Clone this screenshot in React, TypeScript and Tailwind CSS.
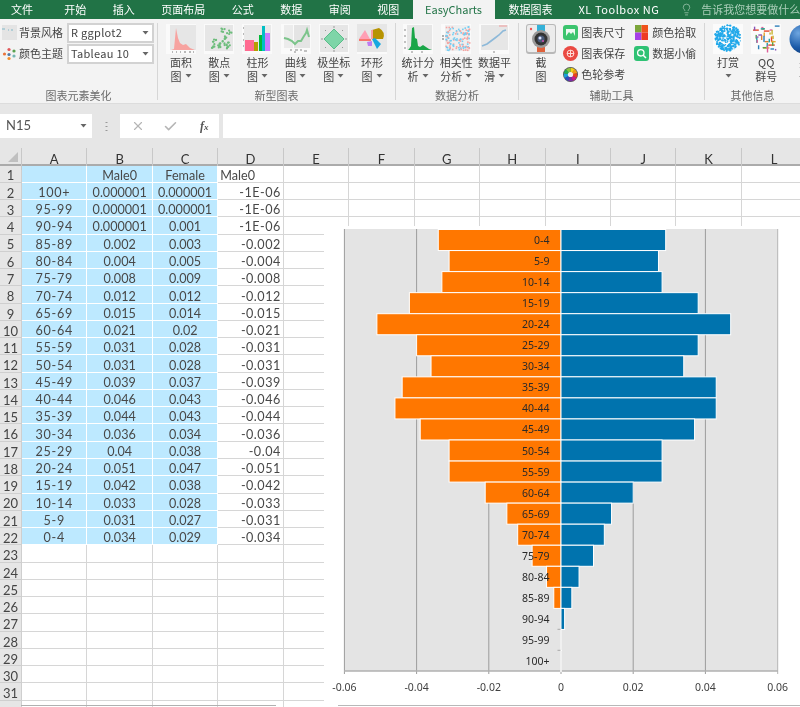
import React from "react";
import { X, Check, Lightbulb } from "lucide-react";

const cjk = "[font-family:'Noto_Sans_CJK_SC','Noto_Sans',sans-serif]";

type Row = [string, string, string, string];
const rows: Row[] = [
  ["", "Male0", "Female", "Male0"],
  ["100+", "0.000001", "0.000001", "-1E-06"],
  ["95-99", "0.000001", "0.000001", "-1E-06"],
  ["90-94", "0.000001", "0.001", "-1E-06"],
  ["85-89", "0.002", "0.003", "-0.002"],
  ["80-84", "0.004", "0.005", "-0.004"],
  ["75-79", "0.008", "0.009", "-0.008"],
  ["70-74", "0.012", "0.012", "-0.012"],
  ["65-69", "0.015", "0.014", "-0.015"],
  ["60-64", "0.021", "0.02", "-0.021"],
  ["55-59", "0.031", "0.028", "-0.031"],
  ["50-54", "0.031", "0.028", "-0.031"],
  ["45-49", "0.039", "0.037", "-0.039"],
  ["40-44", "0.046", "0.043", "-0.046"],
  ["35-39", "0.044", "0.043", "-0.044"],
  ["30-34", "0.036", "0.034", "-0.036"],
  ["25-29", "0.04", "0.038", "-0.04"],
  ["20-24", "0.051", "0.047", "-0.051"],
  ["15-19", "0.042", "0.038", "-0.042"],
  ["10-14", "0.033", "0.028", "-0.033"],
  ["5-9", "0.031", "0.027", "-0.031"],
  ["0-4", "0.034", "0.029", "-0.034"],
];

const pyramid = rows.slice(1).reverse();
const columns = ["A", "B", "C", "D", "E", "F", "G", "H", "I", "J", "K", "L"];

function rand(seed: number) {
  let s = seed;
  return () => {
    s = (s * 16807) % 2147483647;
    return s / 2147483647;
  };
}

function Caret({ className = "" }: { className?: string }) {
  return (
    <svg width="7" height="4" viewBox="0 0 7 4" className={className}>
      <polygon points="0.5,0 6.5,0 3.5,3.5" fill="#666" />
    </svg>
  );
}

function Panel({ x = 4, w = 26, y = 1, h = 26 }: { x?: number; w?: number; y?: number; h?: number }) {
  return (
    <>
      <rect x="0" y="0" width="30" height="30" fill="#fafafa" />
      <rect x={x} y={y} width={w} height={h} fill="#e6e6e6" />
    </>
  );
}

const Mini = ({ children }: { children: React.ReactNode }) => (
  <svg width="30" height="30" viewBox="0 0 30 30">
    {children}
  </svg>
);

const AreaIcon = () => (
  <Mini>
    <Panel x={4} w={26} y={1} h={25} />
    <path d="M5 26 L8 25 L10 4 L12 14 L14 19 L17 21 L20 20 L24 24 L29 26 Z" fill="#f7a3a0" />
    <path d="M6 28h1M10 28h1M14 28h1M18 28h2M23 28h2M27 28h1" stroke="#777" />
  </Mini>
);

const scatter = (() => {
  const r = rand(77);
  const c: [number, number][] = [[20, 6], [25, 8], [23, 13], [11, 17], [18, 19], [25, 20], [8, 22], [15, 22], [22, 23]];
  return c.flatMap(([x, y]) => Array.from({ length: 5 }, () => [x + (r() - 0.5) * 5, y + (r() - 0.5) * 4]));
})();
const ScatterIcon = () => (
  <Mini>
    <Panel x={1} w={28} y={1} h={26} />
    {scatter.map(([x, y], i) => (
      <circle key={i} cx={x} cy={y} r="1.1" fill="#6dbd7c" />
    ))}
  </Mini>
);

const BarIcon = () => (
  <Mini>
    <rect width="30" height="30" fill="#fafafa" />
    <rect x="2" y="1" width="27" height="26" fill="#e9e9e9" />
    <rect x="3" y="16" width="9" height="11" fill="#ff6b91" />
    <rect x="12" y="18" width="4" height="9" fill="#b79f00" />
    <rect x="17" y="11" width="4" height="16" fill="#00ba38" />
    <rect x="20" y="2" width="3" height="25" fill="#00bfc4" />
    <rect x="23" y="9" width="5" height="18" fill="#c77cff" />
    <path d="M1 4h1M1 10h1M1 16h1M1 22h1" stroke="#777" />
  </Mini>
);

const LineIcon = () => (
  <Mini>
    <rect width="30" height="30" fill="#fafafa" />
    <rect x="3" y="1" width="9" height="23" fill="#ececec" />
    <rect x="13" y="1" width="16" height="23" fill="#e4e4e4" />
    <path d="M3 14 L7 15 L11 17 L14 20 L17 17 L20 17 L23 12 L25 9 L26 6 L28 13" fill="none" stroke="#7cc48b" strokeWidth="2" />
    <path d="M9 26h2M14 26h3M19 26h2M23 27h3M13 28h2" stroke="#888" />
  </Mini>
);

const PolarIcon = () => (
  <Mini>
    <Panel x={1} w={28} y={1} h={27} />
    <polygon points="15,5 25,15 15,25 5,15" fill="#7ed5a8" stroke="#59bd89" />
    <path d="M15 2v2M15 26v2M2 15h2M26 15h2M6 6l1 1M24 6l-1 1M6 24l1-1M24 24l-1-1" stroke="#999" />
  </Mini>
);

const DonutIcon = () => (
  <Mini>
    <Panel x={0} w={30} y={0} h={28} />
    <polygon points="2,15 8,6 13,15" fill="#ff9fb4" />
    <rect x="2" y="15" width="12" height="2" fill="#f8766d" />
    <path d="M15 6 L22 4 Q29 8 26 15 L15 15Z" fill="#b79300" />
    <polygon points="15,15 18,14 24,20 20,25" fill="#17a8e0" />
    <polygon points="10,18 15,17 15,22 11,22" fill="#bf7cf2" />
    <rect x="14" y="6" width="2" height="9" fill="#f8a0a0" />
  </Mini>
);

const StatIcon = () => (
  <Mini>
    <Panel x={4} w={25} y={1} h={25} />
    <path d="M5 26 L6 25 L8 22 L9 4 L11 3 L12 14 L14 15 L15 22 L17 23 L20 21 L23 23 L26 25 L29 26Z" fill="#1aa648" />
    <path d="M1 6h2M1 12h2M1 18h2M1 24h2M8 28h2M18 28h2" stroke="#888" />
  </Mini>
);

const corr = (() => {
  const r = rand(41);
  return Array.from({ length: 120 }, () => ({ x: 4 + r() * 24, y: 2 + r() * 24, blue: r() > 0.45 }));
})();
const CorrIcon = () => (
  <Mini>
    <rect width="30" height="30" fill="#fafafa" />
    <rect x="4" y="1" width="25" height="26" fill="#eeeeee" />
    {corr.map((d, i) => (
      <rect key={i} x={d.x} y={d.y} width="1.6" height="1.6" fill={d.blue ? "#74cdf2" : "#f5a3a0"} />
    ))}
    <path d="M1 12h2M1 15h2" stroke="#666" />
  </Mini>
);

const SmoothIcon = () => (
  <Mini>
    <rect width="30" height="30" fill="#fafafa" />
    <rect x="2" y="1" width="27" height="25" fill="#e6e6e6" />
    <path d="M3 22 L8 20 L12 17 L16 14 L20 11 L24 7 L27 6" stroke="#8db9d9" strokeWidth="1.6" fill="none" />
    <path d="M20 2h8" stroke="#f09a9a" />
    <path d="M14 28h2" stroke="#888" />
  </Mini>
);

const CameraIcon = () => (
  <Mini>
    <rect x="0" y="0" width="30" height="30" rx="3" fill="#b8b8b8" />
    <rect x="1" y="1" width="28" height="27" rx="2" fill="#ececec" />
    <rect x="11" y="1" width="8" height="6" fill="#35b1d8" />
    <rect x="11" y="23" width="8" height="5" fill="#e0613a" />
    <circle cx="5" cy="5" r="1.2" fill="#e55" />
    <circle cx="15" cy="15" r="9" fill="#9a9a9a" />
    <circle cx="15" cy="15" r="6.5" fill="#333" />
    <circle cx="15" cy="15" r="3.6" fill="#4a5a78" />
    <circle cx="14" cy="14" r="1.5" fill="#dbe4ff" />
    <circle cx="17" cy="17" r="1" fill="#d04fb0" />
  </Mini>
);

function Small({ children }: { children: React.ReactNode }) {
  return (
    <svg width="15" height="15" viewBox="0 0 15 15" className="shrink-0">
      {children}
    </svg>
  );
}

const SizeIcon = () => (
  <Small>
    <rect width="15" height="15" rx="3" fill="#3cc46e" />
    <rect x="3" y="4" width="9" height="7" fill="#fff" opacity="0.9" />
    <path d="M3 11 L6 7 L8 9 L10 7 L12 11Z" fill="#3cc46e" />
  </Small>
);
const SaveIcon = () => (
  <Small>
    <circle cx="7.5" cy="7.5" r="7.5" fill="#ea4a43" />
    <circle cx="7.5" cy="7.5" r="3.4" fill="none" stroke="#ffd9d4" />
    <path d="M4 7.5h7M7.5 4v7" stroke="#ffd9d4" />
  </Small>
);
const wheelColors = ["#f5d315", "#f59a14", "#e8411d", "#d0188a", "#7a2da8", "#2b4cc0", "#1aa0d8", "#1fae55", "#8cc63f"];
const WheelIcon = () => (
  <Small>
    <circle cx="7.5" cy="7.5" r="7.5" fill="#555" />
    {wheelColors.map((c, i) => {
      const a = (i / wheelColors.length) * Math.PI * 2;
      const b = ((i + 1) / wheelColors.length) * Math.PI * 2;
      const R = 6.8;
      return (
        <path
          key={c}
          d={`M7.5 7.5 L${7.5 + R * Math.sin(a)} ${7.5 - R * Math.cos(a)} A${R} ${R} 0 0 1 ${7.5 + R * Math.sin(b)} ${7.5 - R * Math.cos(b)}Z`}
          fill={c}
        />
      );
    })}
    <circle cx="7.5" cy="7.5" r="2.6" fill="#eee" />
  </Small>
);
const PickIcon = () => (
  <Small>
    <rect x="1" y="0" width="6.5" height="7.5" fill="#7ba53a" />
    <rect x="7.5" y="0" width="6.5" height="7.5" fill="#f0531c" />
    <rect x="1" y="7.5" width="6.5" height="7.5" fill="#a640e6" />
    <rect x="7.5" y="7.5" width="6.5" height="7.5" fill="#ee3a22" />
  </Small>
);
const ThiefIcon = () => (
  <Small>
    <rect width="15" height="15" rx="3" fill="#2fc274" />
    <circle cx="6.8" cy="6.8" r="3.2" fill="none" stroke="#fff" strokeWidth="1.3" />
    <path d="M9.2 9.2 L12 12" stroke="#fff" strokeWidth="1.5" />
  </Small>
);

const tipDots = (() => {
  const r = rand(123);
  return Array.from({ length: 260 }, () => {
    const a = r() * Math.PI * 2;
    const d = Math.sqrt(r()) * 13;
    return [15 + d * Math.cos(a), 14 + d * Math.sin(a), 0.5 + r() * 0.8];
  });
})();
const TipIcon = () => (
  <Mini>
    <rect width="30" height="30" fill="#fbfbfb" />
    {tipDots.map(([x, y, s], i) => (
      <circle key={i} cx={x} cy={y} r={s} fill="#22a9ea" />
    ))}
  </Mini>
);

const cloud = (() => {
  const r = rand(9);
  const cs = ["#e64a2e", "#2f7fb8", "#54a34a", "#e6a72e", "#8a55b5", "#dd5f9a", "#20a0a8", "#c7b32e", "#e0812e"];
  return Array.from({ length: 34 }, (_, i) => ({
    x: 2 + r() * 22,
    y: 1 + r() * 24,
    w: 1 + r() * 6,
    vert: r() > 0.6,
    c: cs[i % cs.length],
  }));
})();
const CloudIcon = () => (
  <Mini>
    <rect width="30" height="30" fill="#fbfbfb" />
    {cloud.map((d, i) =>
      d.vert ? (
        <rect key={i} x={d.x} y={d.y} width="1.4" height={d.w} fill={d.c} />
      ) : (
        <rect key={i} x={d.x} y={d.y} width={d.w} height="1.4" fill={d.c} />
      )
    )}
  </Mini>
);

const GlobeIcon = () => (
  <Mini>
    <defs>
      <radialGradient id="globe" cx="0.3" cy="0.3" r="0.9">
        <stop offset="0" stopColor="#6ea6e0" />
        <stop offset="0.55" stopColor="#1a5aa8" />
        <stop offset="1" stopColor="#0b2e68" />
      </radialGradient>
    </defs>
    <circle cx="15" cy="15" r="14.5" fill="url(#globe)" />
  </Mini>
);

function LargeButton({ icon, a, b, caret }: { icon: React.ReactNode; a: string; b?: string; caret?: boolean }) {
  return (
    <div className="flex w-[38.2px] shrink-0 flex-col items-center pt-[5px] text-[11px] leading-[14px] text-[#444]">
      <div className="mb-px h-[30px] w-[30px]">{icon}</div>
      <div className="whitespace-nowrap">{a}</div>
      <div className="flex h-[14px] items-center gap-[3px] whitespace-nowrap">
        {b && <span>{b}</span>}
        {caret && <Caret />}
      </div>
    </div>
  );
}

function Group({ label, className, children }: { label: string; className: string; children: React.ReactNode }) {
  return (
    <div className={`relative flex shrink-0 flex-col ${className}`}>
      <div className="flex h-[69px] overflow-hidden">{children}</div>
      <div className="text-center text-[11px] leading-[14px] text-[#6a6a6a]">{label}</div>
    </div>
  );
}

const Sep = () => <div className="mt-[4px] h-[77px] w-px shrink-0 bg-[#d6d6d6]" />;

function SmallTool({ icon, label }: { icon: React.ReactNode; label: string }) {
  return (
    <div className="flex h-[21px] items-center gap-[3px] text-[11px] text-[#444]">
      {icon}
      <span className="whitespace-nowrap">{label}</span>
    </div>
  );
}

function Combo({ value }: { value: string }) {
  return (
    <div className="flex h-[20px] w-[87px] items-center justify-between border-2 border-[#d2d2d2] bg-white pl-[2px] pr-[3px] text-[11px] tracking-[0.3px] text-[#444]">
      <span>{value}</span>
      <Caret />
    </div>
  );
}

function Chart() {
  const X0 = 561;
  const k = 3610;
  const top = 229;
  const band = 21.05;
  const bottom = 671;
  const ticks = [-0.06, -0.04, -0.02, 0, 0.02, 0.04, 0.06];
  return (
    <svg
      width="476"
      height="481"
      viewBox="324 226 476 481"
      className="absolute left-[324px] top-[78px] bg-white [font-family:'Noto_Sans',sans-serif]"
    >
      <rect x="344.3" y={top} width="433.4" height={bottom - top} fill="#e4e4e4" />
      {ticks.map((t) => {
        const x = X0 + t * k + (t === 0.06 ? 0.1 : 0);
        return (
          <g key={t}>
            <line x1={x} x2={x} y1={top} y2={674} stroke={t === 0.06 ? "#b4b4b4" : "#9c9c9c"} strokeWidth="1" />
            <text x={x} y="691" textAnchor="middle" fontSize="10.5" fill="#404040">
              {t === 0 ? "0" : t.toFixed(2)}
            </text>
          </g>
        );
      })}
      <line x1="344" x2="778" y1={bottom} y2={bottom} stroke="#b0b0b0" strokeWidth="1.6" />
      {pyramid.map(([label, m, f], i) => {
        const y = top + i * band;
        const mw = parseFloat(m) * k;
        const fw = parseFloat(f) * k;
        return (
          <g key={label}>
            <rect x={X0 - mw} y={y + 0.5} width={mw} height={band} fill="#ff7700" stroke="#fff" strokeWidth="1" />
            <rect x={X0} y={y + 0.5} width={fw} height={band} fill="#0073ae" stroke="#fff" strokeWidth="1" />
          </g>
        );
      })}
      <path d="M557.5 629.3h3M557.5 650.3h3" stroke="#a8a8a8" strokeWidth="1" />
      {pyramid.map(([label], i) => (
        <text key={label} x="549.5" y={top + i * band + 15} textAnchor="end" fontSize="10.5" fill="#2a2a2a">
          {label}
        </text>
      ))}
      <line x1="338" x2="800" y1="705.5" y2="705.5" stroke="#b8b8b8" strokeWidth="1" />
    </svg>
  );
}

function Sheet() {
  const allRows = Array.from({ length: 32 }, (_, i) => i);
  return (
    <div className="relative h-[559px] overflow-hidden bg-white text-[12.6px] text-[#484848] [font-family:Lato,'Noto_Sans',sans-serif]">
      <div className="grid h-[17.5px] grid-cols-[22px_repeat(12,65.45px)] border-b-2 border-[#ababab] bg-[#e6e6e6]">
        <div className="relative border-r border-[#c8c8c8]">
          <svg width="10" height="10" viewBox="0 0 10 10" className="absolute left-[8px] top-[4px]">
            <polygon points="10,0 10,10 0,10" fill="#c0c0c0" />
          </svg>
        </div>
        {columns.map((c) => (
          <div key={c} className="flex items-center justify-center border-r border-[#c8c8c8] pt-[2px] text-[13px] text-[#333]">
            {c}
          </div>
        ))}
      </div>
      <div className="grid auto-rows-[17.28px] grid-cols-[22px_repeat(12,65.45px)]">
        {allRows.map((r) => {
          const data = rows[r];
          return (
            <React.Fragment key={r}>
              <div className="flex items-center justify-center border-b border-r border-[#cfcfcf] bg-[#e6e6e6] pt-[5px] text-[13px] text-[#444]">
                {r < 31 ? r + 1 : ""}
              </div>
              {columns.map((c, ci) => {
                const blue = ci < 3 && r < 22;
                const value = data && ci < 4 ? data[ci] : "";
                const right = ci === 3 && r > 0;
                const left = ci === 3 && r === 0;
                const spaced = r > 0 && (ci === 0 ? "tracking-[0.7px]" : ci === 3 ? "tracking-[0.5px]" : "");
                return (
                  <div
                    key={c}
                    className={`flex items-center overflow-visible whitespace-nowrap border-b border-r pt-[5px] ${spaced || ""} ${
                      blue ? "border-white bg-[#bde9ff]" : "border-[#d6d6d6] bg-white"
                    } ${right ? "justify-end pr-[2px]" : left ? "justify-start pl-[2px]" : "justify-center"}`}
                  >
                    {value}
                  </div>
                );
              })}
            </React.Fragment>
          );
        })}
      </div>
      <div className="absolute left-[21px] top-[557px] h-px w-[255px] bg-[#b0b0b0]" />
      <Chart />
    </div>
  );
}

export default function App() {
  return (
    <div className={`h-[707px] w-[800px] overflow-hidden bg-[#e6e6e6] blur-[0.35px] ${cjk}`}>
      {/* Title tabs */}
      <div className="flex h-[19px] items-center overflow-hidden bg-[#217346] text-[11px] text-white">
        <div className="shrink-0 whitespace-nowrap pl-[11px] pr-[18px]">文件</div>
        {["开始", "插入", "页面布局", "公式", "数据", "审阅", "视图"].map((t) => (
          <div key={t} className="shrink-0 whitespace-nowrap px-[13.25px]">
            {t}
          </div>
        ))}
        <div className="flex h-full w-[82px] shrink-0 items-center justify-center bg-[#f3f3f3] text-[#217346]">EasyCharts</div>
        <div className="shrink-0 whitespace-nowrap pl-[14px] pr-[13px]">数据图表</div>
        <div className="shrink-0 whitespace-nowrap px-[13px] tracking-[0.55px]">XL Toolbox NG</div>
        <div className="ml-[8px] flex shrink-0 items-center gap-[8px] whitespace-nowrap text-[#a9cdb8]">
          <Lightbulb size={13} strokeWidth={1.3} />
          <span>告诉我您想要做什么</span>
        </div>
      </div>

      {/* Ribbon */}
      <div className="flex h-[85px] overflow-hidden border-b border-[#dcdcdc] bg-[#f3f3f3]">
        <Group label="图表元素美化" className="w-[157px]">
          <div className="flex flex-col pl-[2px] pt-[3px]">
            <div className="flex h-[21px] items-center text-[11px] text-[#444]">
              <svg width="15" height="15" viewBox="0 0 15 15">
                <rect width="15" height="15" fill="#e4e4e4" />
                <path d="M0 4h3M9 5h2M6 5h1" stroke="#7fb8c8" />
              </svg>
              <span className="ml-[2px] mr-[4px]">背景风格</span>
              <Combo value="R ggplot2" />
            </div>
            <div className="flex h-[21px] items-center text-[11px] text-[#444]">
              <svg width="15" height="15" viewBox="0 0 15 15">
                <circle cx="2.5" cy="8" r="1.6" fill="#e8743b" />
                <circle cx="7" cy="3.5" r="1.6" fill="#e15759" />
                <circle cx="7" cy="8.5" r="1.6" fill="#4e79a7" />
                <circle cx="7" cy="12.5" r="1.6" fill="#f28e2b" />
                <circle cx="12" cy="5" r="1.6" fill="#59a14f" />
                <circle cx="12" cy="10" r="1.6" fill="#76b7b2" />
              </svg>
              <span className="ml-[2px] mr-[4px]">颜色主题</span>
              <Combo value="Tableau 10" />
            </div>
          </div>
        </Group>
        <Sep />
        <Group label="新型图表" className="w-[237px]">
          <div className="flex pl-[4px]">
            <LargeButton icon={<AreaIcon />} a="面积" b="图" caret />
            <LargeButton icon={<ScatterIcon />} a="散点" b="图" caret />
            <LargeButton icon={<BarIcon />} a="柱形" b="图" caret />
            <LargeButton icon={<LineIcon />} a="曲线" b="图" caret />
            <LargeButton icon={<PolarIcon />} a="极坐标" b="图" caret />
            <LargeButton icon={<DonutIcon />} a="环形" b="图" caret />
          </div>
        </Group>
        <Sep />
        <Group label="数据分析" className="w-[122px]">
          <div className="flex pl-[3px]">
            <LargeButton icon={<StatIcon />} a="统计分" b="析" caret />
            <LargeButton icon={<CorrIcon />} a="相关性" b="分析" caret />
            <LargeButton icon={<SmoothIcon />} a="数据平" b="滑" caret />
          </div>
        </Group>
        <Sep />
        <Group label="辅助工具" className="w-[185px]">
          <div className="flex pl-[3px]">
            <LargeButton icon={<CameraIcon />} a="截" b="图" />
            <div className="ml-[3px] flex w-[71px] flex-col pt-[3px]">
              <SmallTool icon={<SizeIcon />} label="图表尺寸" />
              <SmallTool icon={<SaveIcon />} label="图表保存" />
              <SmallTool icon={<WheelIcon />} label="色轮参考" />
            </div>
            <div className="flex w-[71px] flex-col pt-[3px]">
              <SmallTool icon={<PickIcon />} label="颜色拾取" />
              <SmallTool icon={<ThiefIcon />} label="数据小偷" />
            </div>
          </div>
        </Group>
        <Sep />
        <Group label="其他信息" className="w-[122px] pr-[27px]">
          <div className="flex pl-[4px]">
            <LargeButton icon={<TipIcon />} a="打赏" caret />
            <LargeButton icon={<CloudIcon />} a="QQ" b="群号" />
            <LargeButton icon={<GlobeIcon />} a="关" b="于" />
          </div>
        </Group>
      </div>

      {/* Formula bar */}
      <div className="mt-[10px] flex h-[24px] bg-[#e6e6e6] text-[#555]">
        <div className="flex w-[92px] items-center justify-between bg-white pl-[6px] pr-[5px] text-[13px] [font-family:Lato,sans-serif]">
          <span>N15</span>
          <Caret />
        </div>
        <div className="flex w-[28px] items-center justify-center">
          <svg width="3" height="11" viewBox="0 0 3 11">
            <path d="M1.5 1v1M1.5 5v1M1.5 9v1" stroke="#999" strokeWidth="2" />
          </svg>
        </div>
        <div className="flex w-[99px] items-center bg-white pl-[11px]">
          <X size={14} strokeWidth={2} className="text-[#b5b5b5]" />
          <Check size={15} strokeWidth={2.5} className="ml-[18px] text-[#b5b5b5]" />
          <span className="ml-[22px] text-[12px] font-bold italic text-[#555] [font-family:'Liberation_Serif',serif]">
            f<span className="text-[9px]">x</span>
          </span>
        </div>
        <div className="ml-[4px] flex-1 bg-white" />
      </div>

      {/* Sheet */}
      <div className="mt-[10px]">
        <Sheet />
      </div>
    </div>
  );
}
